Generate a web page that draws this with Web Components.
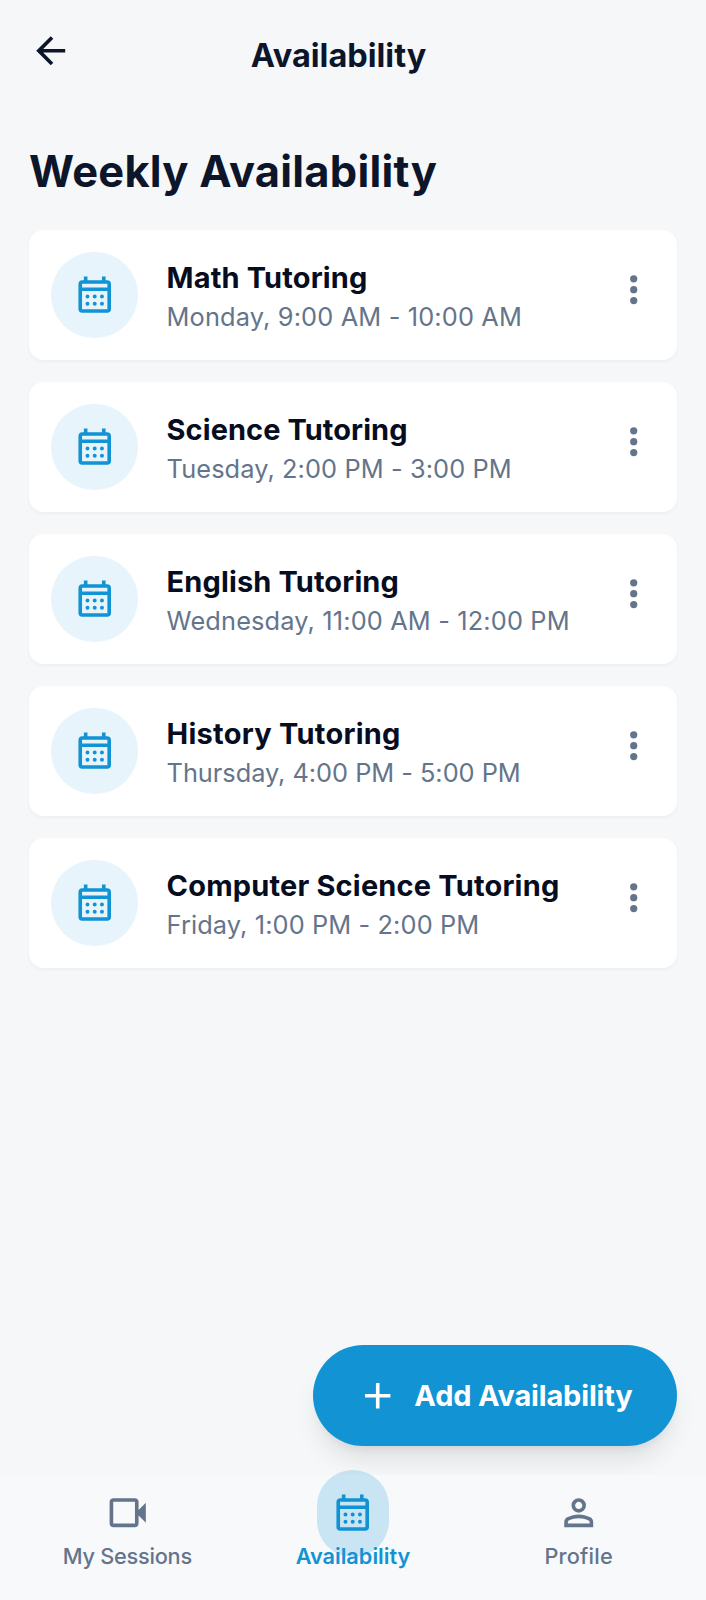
<!DOCTYPE html>
<html lang="en">
<head>
<meta charset="utf-8">
<title>Availability</title>
<style>
html,body{margin:0;padding:0;background:#f6f7f9}
body{font-family:Inter,sans-serif;color:#0c152a}
</style>
</head>
<body>
<availability-app></availability-app>
<script>
const ICONS = {
  back: 'm7.825 13 5.6 5.6L12 20l-8-8 8-8 1.425 1.4-5.6 5.6H20v2H7.825Z',
  calendar: 'M5 22q-.825 0-1.412-.587T3 20V6q0-.825.588-1.412T5 4h1V2h2v2h8V2h2v2h1q.825 0 1.413.588T21 6v14q0 .825-.587 1.413T19 22H5Zm0-2h14V10H5v10ZM5 8h14V6H5v2Zm7 6.1a1.1 1.1 0 1 1 0-2.2 1.1 1.1 0 0 1 0 2.2Zm-4 0a1.1 1.1 0 1 1 0-2.2 1.1 1.1 0 0 1 0 2.2Zm8 0a1.1 1.1 0 1 1 0-2.2 1.1 1.1 0 0 1 0 2.2Zm-4 4a1.1 1.1 0 1 1 0-2.2 1.1 1.1 0 0 1 0 2.2Zm-4 0a1.1 1.1 0 1 1 0-2.2 1.1 1.1 0 0 1 0 2.2Zm8 0a1.1 1.1 0 1 1 0-2.2 1.1 1.1 0 0 1 0 2.2Z',
  more: 'M12 20a2 2 0 1 1 0-4 2 2 0 0 1 0 4Zm0-6a2 2 0 1 1 0-4 2 2 0 0 1 0 4Zm0-6a2 2 0 1 1 0-4 2 2 0 0 1 0 4Z',
  plus: 'M11 13H5v-2h6V5h2v6h6v2h-6v6h-2v-6Z',
  video: 'M4 20q-.825 0-1.412-.587T2 18V6q0-.825.588-1.412T4 4h12q.825 0 1.413.588T18 6v4.5l4-4v11l-4-4V18q0 .825-.587 1.413T16 20H4Zm0-2h12V6H4v12Z',
  person: 'M12 12q-1.65 0-2.825-1.175T8 8t1.175-2.825T12 4t2.825 1.175T16 8t-1.175 2.825T12 12Zm-8 8v-2.8q0-.85.438-1.562T5.6 14.55q1.55-.775 3.15-1.163T12 13q1.65 0 3.25.388t3.15 1.162q.725.375 1.163 1.088T20 17.2V20H4Zm2-2h12v-.8q0-.275-.137-.5t-.363-.35q-1.35-.675-2.725-1.012T12 15t-2.775.338T6.5 16.35q-.225.125-.362.35T6 17.2v.8Zm6-8q.825 0 1.413-.587T14 8t-.587-1.412T12 6t-1.412.588T10 8t.588 1.413T12 10Z'
};
function define(name, render) {
  customElements.define(name, class extends HTMLElement {
    constructor() { super(); this.attachShadow({ mode: 'open' }); }
    connectedCallback() { this.shadowRoot.innerHTML = render(this); }
  });
}
define('ui-icon', el => `
<style>:host{display:block;flex:none;width:43.45px;height:43.45px}svg{display:block;width:100%;height:100%}</style>
<svg viewBox="0 0 24 24" fill="currentColor"><path d="${ICONS[el.getAttribute('name')]}"/></svg>`);

define('app-header', () => `
<style>
:host{display:flex;align-items:flex-start;padding:29px 101.4px 29px 29px;height:51px}
h1{flex:1;margin:0;text-align:center;font-size:32.5px;line-height:53px;font-weight:700}
</style>
<ui-icon name="back"></ui-icon><h1><slot></slot></h1>`);

define('slot-card', () => `
<style>
:host{display:flex;align-items:center;gap:29px;box-sizing:border-box;height:130.3px;padding:21.7px;background:#fff;border-radius:14.5px;box-shadow:0 1.8px 3.6px rgba(0,0,0,.04)}
.disc{flex:none;display:grid;place-items:center;width:86.9px;height:86.9px;border-radius:50%;background:#e7f4fb;color:#1193d4}
.disc ui-icon{margin-left:1px}
.text{flex:1;white-space:nowrap}
.t{padding-top:1px;font-size:28.96px;line-height:43.45px;font-weight:700;color:#070d20;letter-spacing:var(--title-track,0)}
.s{margin-top:-1px;font-size:25.34px;line-height:36.2px;color:#64748b;letter-spacing:var(--track,0)}
.more{color:#64748b;padding-bottom:10px}
</style>
<div class="disc"><ui-icon name="calendar"></ui-icon></div>
<div class="text"><div class="t"><slot></slot></div><div class="s"><slot name="time"></slot></div></div>
<div class="more"><ui-icon name="more"></ui-icon></div>`);

define('add-button', () => `
<style>
:host{display:flex;align-items:center;gap:14.5px;box-sizing:border-box;height:101.4px;padding:0 44.4px 0 43.4px;border-radius:51px;background:#1193d4;color:#fff;font-size:28.96px;font-weight:700;letter-spacing:-.16px;white-space:nowrap;box-shadow:0 18px 27px -5.4px rgba(0,0,0,.1),0 7.2px 10.9px -7.2px rgba(0,0,0,.1)}
</style>
<ui-icon name="plus"></ui-icon><span><slot></slot></span>`);

define('nav-item', el => `
<style>
:host{display:flex;flex-direction:column;align-items:center;color:#64748b;font-size:21.72px;line-height:29px;font-weight:500}
:host([active]){color:#1193d4;font-weight:600}
.i{position:relative;margin-bottom:7.7px}
:host([active]) .i::before{content:"";position:absolute;left:-14.5px;right:-14.5px;top:-21.7px;height:86.9px;border-radius:36.2px;background:#1193d433}
.l{position:relative;letter-spacing:var(--track,0)}
</style>
<div class="i"><ui-icon name="${el.getAttribute('icon')}"></ui-icon></div><div class="l"><slot></slot></div>`);

define('bottom-nav', () => `
<style>
:host{display:grid;grid-template-columns:repeat(3,1fr);box-sizing:border-box;height:125px;padding:16.3px 14.5px 0;background:#f8f9fbf2;position:relative}
</style><slot></slot>`);

define('availability-app', () => `
<style>
:host{display:flex;flex-direction:column;height:1600px;overflow:hidden;background:#f6f7f9}
main{flex:1;padding:35.5px 29px 0}
h2{margin:0 0 33.3px;font-size:43.45px;line-height:52px;font-weight:700;letter-spacing:.25px}
.list{display:grid;gap:21.72px}
.fab{display:flex;justify-content:flex-end;padding:0 29px 29px}
</style>
<app-header>Availability</app-header>
<main><h2>Weekly Availability</h2><div class="list">
${[['Math','Monday, 9:00 AM - 10:00 AM',.16,.16],['Science','Tuesday, 2:00 PM - 3:00 PM',.11,.08],['English','Wednesday, 11:00 AM - 12:00 PM',.16,.14],['History','Thursday, 4:00 PM - 5:00 PM',-.02,.27],['Computer Science','Friday, 1:00 PM - 2:00 PM',.12,.2]].map(([a,b,t,u])=>`<slot-card style="--track:${t}px;--title-track:${u}px">${a} Tutoring<span slot="time">${b}</span></slot-card>`).join('')}
</div></main>
<div class="fab"><add-button>Add Availability</add-button></div>
<bottom-nav><nav-item icon="video" style="--track:-.24px">My Sessions</nav-item><nav-item icon="calendar" active>Availability</nav-item><nav-item icon="person" style="--track:.2px">Profile</nav-item></bottom-nav>`);
</script>
</body>
</html>
